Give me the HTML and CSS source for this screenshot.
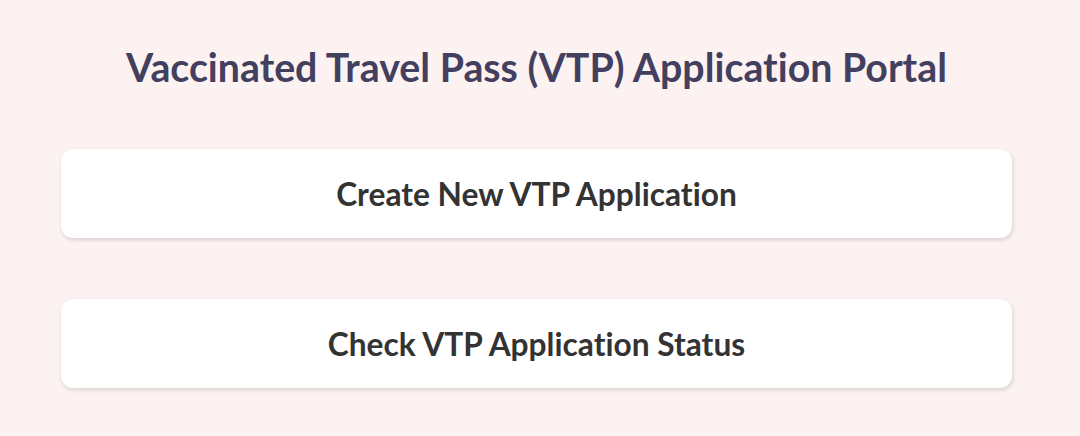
FILE: index.html
```html
<!DOCTYPE html>
<html>
<head>
<meta charset="utf-8">
<link rel="stylesheet" href="styles.css">
</head>
<body>
<main class="portal">
  <h1 class="title">Vaccinated Travel Pass (VTP) Application Portal</h1>
  <div class="actions">
    <button class="action">Create New VTP Application</button>
    <button class="action">Check VTP Application Status</button>
  </div>
</main>
</body>
</html>
```
FILE: styles.css
```css
html, body {
  margin: 0;
  padding: 0;
  background: #fdf2f2;
}
body {
  font-family: Lato, "Noto Sans", sans-serif;
  font-variant-ligatures: none;
  height: 436px;
  overflow: hidden;
}
.portal {
  width: 951px;
  margin-left: 61px;
  padding-top: 44px;
  display: flex;
  flex-direction: column;
}
.title {
  margin: 0;
  text-align: center;
  font-size: 39.3px;
  line-height: 46px;
  font-weight: 700;
  color: #42405e;
}
.actions {
  margin-top: 59px;
  display: flex;
  flex-direction: column;
  gap: 61px;
}
.action {
  height: 89px;
  border: none;
  border-radius: 12px;
  background: #ffffff;
  box-shadow: 1px 2px 4px rgba(0, 0, 0, 0.14);
  font-family: Lato, "Noto Sans", sans-serif;
  font-variant-ligatures: none;
  font-size: 31.7px;
  font-weight: 700;
  color: #333333;
  padding: 0;
}
```
